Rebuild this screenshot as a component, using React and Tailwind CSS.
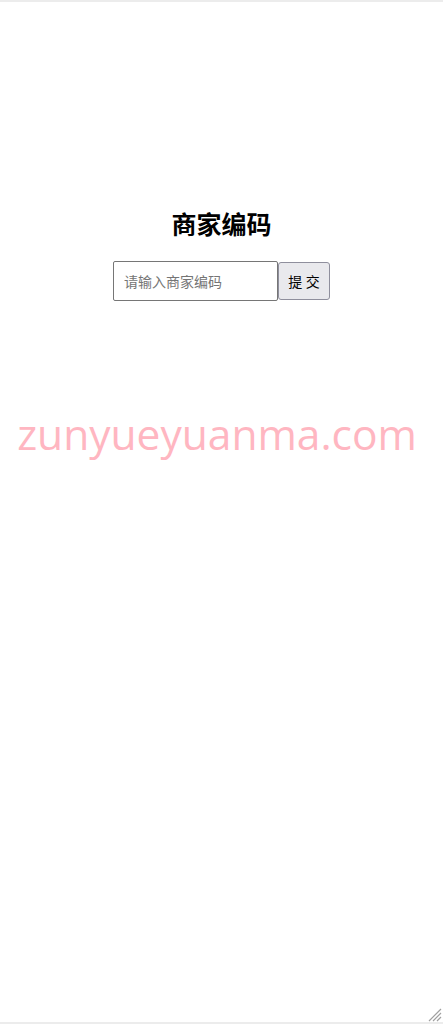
export default function App() {
  return (
    <div
      className="relative h-[1024px] w-full overflow-hidden bg-white border-t-2 border-b-2 border-[#ececec]"
      style={{ fontFamily: '"Noto Sans", "Noto Sans CJK SC", sans-serif' }}
    >
      {/* Merchant code form */}
      <div className="flex flex-col items-center pt-[206px]">
        <h1 className="text-[25px] font-bold leading-[32px] text-black">商家编码</h1>
        <div className="mt-[21px] flex items-center">
          <input
            type="text"
            placeholder="请输入商家编码"
            className="h-[40px] w-[165px] rounded-[2px] border border-[#767676] bg-white px-[10px] text-[14px] text-black outline-none placeholder:text-[#757575]"
          />
          <button className="h-[38px] w-[52px] rounded-[3px] border border-[#8f8f9d] bg-[#e9e9ed] text-[14px] text-black">
            提 交
          </button>
        </div>
      </div>

      {/* Watermark */}
      <div
        className="pointer-events-none absolute left-0 right-0 top-[404px] pr-[9px] text-center text-[42.5px] leading-[56px] text-[#ffb6c1]"
        style={{ fontFamily: '"Open Sans", sans-serif' }}
      >
        zunyueyuanma.com
      </div>

      {/* Resize grip */}
      <svg className="absolute bottom-0 right-[1px]" width="14" height="14" viewBox="0 0 14 14">
        <path d="M13 1 L1 13 M13 5 L5 13 M13 9 L9 13" stroke="#a0a0a0" strokeWidth="1.2" />
      </svg>
    </div>
  );
}
